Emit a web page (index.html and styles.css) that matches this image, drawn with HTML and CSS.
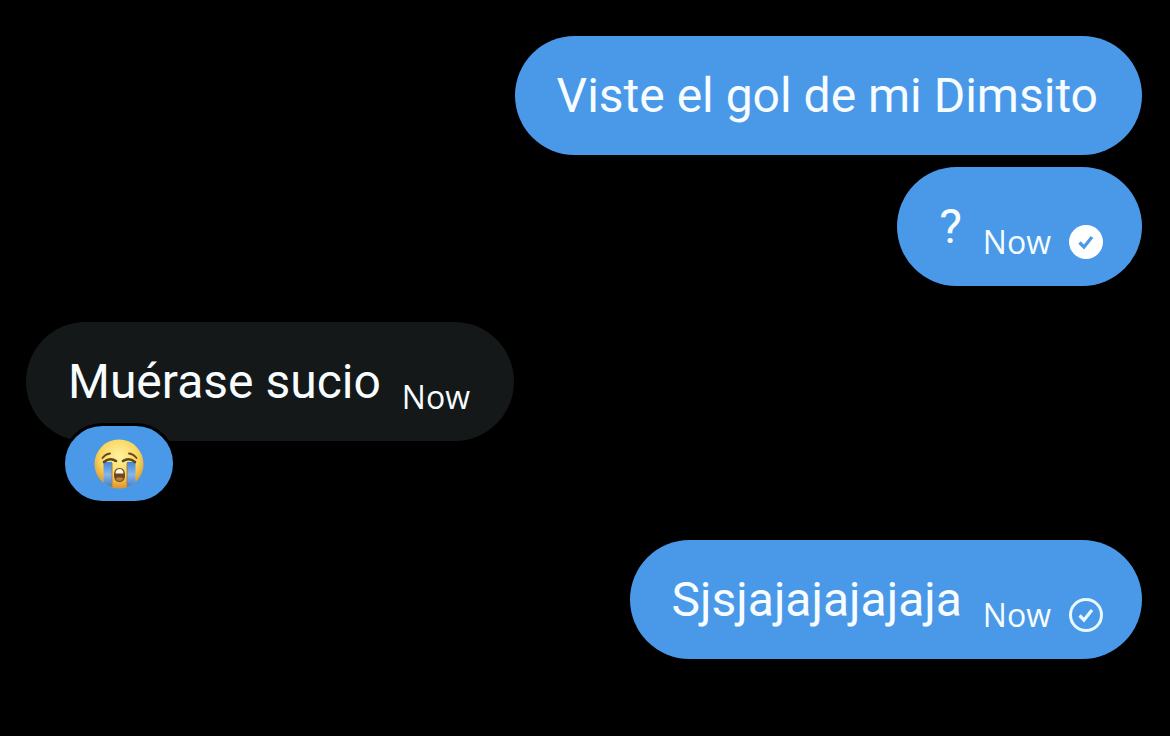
FILE: index.html
```html
<!DOCTYPE html>
<html lang="es">
<head>
  <meta charset="UTF-8" />
  <meta name="viewport" content="width=device-width, initial-scale=1.0"/>
  <title>Chat</title>
  <link rel="stylesheet" href="styles.css">
</head>
<body>
  <main class="chat">
    <div class="group sent">
      <div class="bubble">
        <p class="text">Viste el gol de mi Dimsito</p>
      </div>
      <div class="bubble">
        <p class="text">?</p>
        <div class="meta">
          <time>Now</time>
          <svg class="check" viewBox="0 0 34 34" role="img" aria-label="Enviado">
            <circle cx="17" cy="17" r="17" fill="#fff"/>
            <path d="M10.5 17.5l4.5 4.5 8-10" fill="none" stroke="#4a99e9" stroke-width="3.2"/>
          </svg>
        </div>
      </div>
    </div>

    <div class="group received">
      <div class="bubble">
        <p class="text">Muérase sucio</p>
        <div class="meta">
          <time>Now</time>
        </div>
      </div>
      <button class="reaction" type="button" aria-label="Llorando a mares">
        <svg class="emoji" viewBox="0 0 50 50" aria-hidden="true">
          <defs>
            <radialGradient id="face" cx="50%" cy="35%" r="65%">
              <stop offset="0" stop-color="#fff3a0"/>
              <stop offset="0.6" stop-color="#f9d65f"/>
              <stop offset="1" stop-color="#dd932c"/>
            </radialGradient>
            <linearGradient id="tears" x1="0" y1="0" x2="0" y2="1">
              <stop offset="0" stop-color="#3f86d8"/>
              <stop offset="0.5" stop-color="#86b6ea"/>
              <stop offset="1" stop-color="#3c80cf"/>
            </linearGradient>
          </defs>
          <circle cx="25" cy="25" r="24.5" fill="url(#face)"/>
          <path d="M9.5 23H18v25q-4.500-1-8.500-4z" fill="url(#tears)"/>
          <path d="M33 23h8.500v20q-4 4-8.500 5z" fill="url(#tears)"/>
          <path d="M18 24v24M33 24v24" fill="none" stroke="#a8803c" stroke-width="1"/>
          <path d="M8.5 19q3-4 7.5-4.5M42.5 19q-3-4-7.5-4.5" fill="none" stroke="#6b4218" stroke-width="1.8" stroke-linecap="round"/>
          <path d="M10 23q6-5 12-1M41 23q-6-5-12-1" fill="none" stroke="#5e4420" stroke-width="2.6" stroke-linecap="round"/>
          <path d="M25.5 29c4 0 5.5 3 5.5 7s-1.5 7-5.5 7-5.5-3-5.5-7 1.5-7 5.500-7z" fill="#70451c"/>
          <path d="M21.5 34.5c0-3 1.500-4.500 4-4.500s4 1.500 4 4.500z" fill="#fff6e8"/>
          <path d="M21.5 39.5q4-2.5 8 0-1 2.500-4 2.500t-4-2.500z" fill="#b57f45"/>
        </svg>
      </button>
    </div>

    <div class="group sent">
      <div class="bubble">
        <p class="text">Sjsjajajajajaja</p>
        <div class="meta">
          <time>Now</time>
          <svg class="check" viewBox="0 0 34 34" role="img" aria-label="Enviando">
            <circle cx="17" cy="17" r="15.5" fill="none" stroke="#e9f8ff" stroke-width="3"/>
            <path d="M10.5 17.5l4.5 4.5 8-10" fill="none" stroke="#e9f8ff" stroke-width="3.2"/>
          </svg>
        </div>
      </div>
    </div>
  </main>
</body>
</html>
```
FILE: styles.css
```css
:root {
  --background: #000;
  --sent: #4a99e9;
  --received: #151819;
  --text: #f7fdff;
}

* {
  box-sizing: border-box;
  margin: 0;
  padding: 0;
}

body {
  font-family: Roboto, "Noto Sans", sans-serif;
  background: var(--background);
  color: var(--text);
}

.chat {
  display: flex;
  flex-direction: column;
  padding: 36px 28px 36px 26px;
}

.group {
  display: flex;
  flex-direction: column;
  gap: 12px;
}

.sent {
  align-items: flex-end;
}

.received {
  align-items: flex-start;
  margin: 36px 0;
}

.bubble {
  display: flex;
  align-items: flex-start;
  gap: 21px;
  min-height: 119px;
  padding: 25px 44px 21px 42px;
  border-radius: 60px;
  background: var(--sent);
}

.received .bubble {
  background: var(--received);
}

.text {
  font-size: 48px;
  line-height: 70px;
}

.meta {
  display: flex;
  align-items: center;
  gap: 18px;
  padding-top: 27px;
  font-family: "Open Sans", "Noto Sans", sans-serif;
  font-size: 32px;
  line-height: 46px;
}

.sent .meta {
  margin-right: -5px;
}

.check {
  width: 34px;
  height: 34px;
}

/* Sits over the bottom edge of the bubble */
.reaction {
  display: flex;
  align-items: center;
  justify-content: center;
  width: 114px;
  height: 81px;
  margin: -30px 0 0 36px;
  border: 3px solid var(--background);
  border-radius: 41px;
  background: var(--sent);
  cursor: pointer;
}

.emoji {
  width: 50px;
  height: 50px;
}
```
